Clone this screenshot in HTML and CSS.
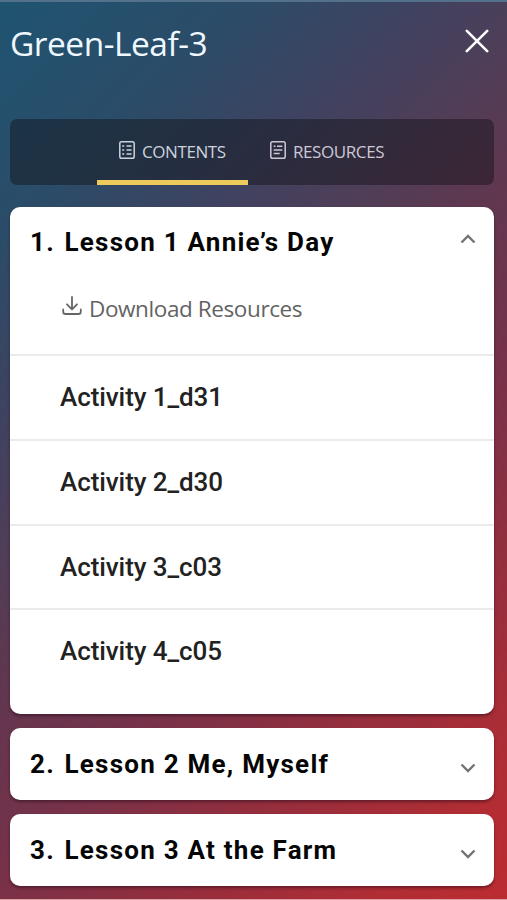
FILE: index.html
```html
<!DOCTYPE html>
<html lang="en">
<head>
<meta charset="utf-8">
<title>Green-Leaf-3</title>
<link rel="stylesheet" href="styles.css">
</head>
<body>
<div class="panel">
  <header class="header">
    <h1 class="title">Green-Leaf-3</h1>
    <svg class="close" viewBox="0 0 24 24"><path d="M1.8 1.8 22.2 22.2M22.2 1.8 1.8 22.2"/></svg>
  </header>
  <nav class="tabs">
    <a class="tab tab-active">
      <svg class="tab-icon" viewBox="0 0 16 18"><rect x=".8" y=".8" width="14.4" height="16.4" rx="1.8"/><path d="M3.2 5h2M7.5 5h5M3.2 9h2M7.5 9h5M3.2 13h2M7.5 13h5"/></svg>
      <span class="tab-label">CONTENTS</span>
    </a>
    <a class="tab">
      <svg class="tab-icon" viewBox="0 0 16 18"><rect x=".8" y=".8" width="14.4" height="16.4" rx="1.8"/><path d="M3.7 5.2h1.8M7 5.2h5.3M3.7 9h8.6M3.7 12.6h6"/></svg>
      <span class="tab-label">RESOURCES</span>
    </a>
  </nav>
  <main class="lessons">
    <section class="card">
      <div class="lesson lesson-open">
        <h2 class="lesson-title"><span class="num">1.</span><span>Lesson 1 Annie’s Day</span></h2>
        <svg class="chevron" viewBox="0 0 16 10"><path d="M1.5 8.5 8 2l6.500 6.500"/></svg>
      </div>
      <div class="download">
        <svg class="download-icon" viewBox="0 0 20 20"><path d="M10 1v12M5 8.300l5 5 5-5M1.200 13.500v2.200q0 2.300 2.300 2.300h13q2.300 0 2.300-2.300v-2.200"/></svg>
        <span>Download Resources</span>
      </div>
      <ul class="activities">
        <li class="activity">Activity 1_d31</li>
        <li class="activity">Activity 2_d30</li>
        <li class="activity">Activity 3_c03</li>
        <li class="activity">Activity 4_c05</li>
      </ul>
    </section>
    <section class="card">
      <div class="lesson">
        <h2 class="lesson-title"><span class="num">2.</span><span>Lesson 2 Me, Myself</span></h2>
        <svg class="chevron" viewBox="0 0 16 10"><path d="M1.5 1.500 8 8l6.500-6.500"/></svg>
      </div>
    </section>
    <section class="card">
      <div class="lesson">
        <h2 class="lesson-title"><span class="num">3.</span><span>Lesson 3 At the Farm</span></h2>
        <svg class="chevron" viewBox="0 0 16 10"><path d="M1.5 1.500 8 8l6.500-6.500"/></svg>
      </div>
    </section>
  </main>
</div>
</body>
</html>
```
FILE: styles.css
```css
* { box-sizing: border-box; }
body { margin: 0; }
.panel {
  height: 900px;
  padding: 0 13.5px 0 10px;
  overflow: hidden;
  border-top: 2px solid #53718a;
  border-bottom: 1px solid #dca0a4;
  background: linear-gradient(135deg, #1f5471 0%, #2b4c68 17%, #3f4260 30%, #4f3e58 39%, #5d3850 47%, #75324a 61%, #922e3e 75%, #b12d34 91%, #bb2c30 100%);
  font-family: "Open Sans", sans-serif;
}
.header {
  height: 117px;
  padding: 16px 4.5px 0 0;
  display: flex;
  justify-content: space-between;
  align-items: flex-start;
}
.title { margin: 0; font-size: 33.5px; line-height: 50px; font-weight: 400; letter-spacing: -.5px; color: #eff8ff; }
.close { width: 24px; height: 24px; margin-top: 11px; fill: none; stroke: #fff; stroke-width: 2.6; stroke-linecap: round; }
.tabs {
  height: 66px;
  padding-left: 87px;
  display: flex;
  border-radius: 7px;
  background: rgba(15, 15, 20, .44);
}
.tab {
  width: 151px;
  height: 66px;
  padding-left: 22px;
  display: flex;
  gap: 7px;
  align-items: center;
  border-bottom: 5px solid transparent;
  color: #cbd3df;
}
.tab-active { border-bottom-color: #edca5c; }
.tab + .tab { color: #ccc8d6; }
.tab-icon { width: 16px; height: 18px; flex: none; fill: none; stroke: currentColor; stroke-width: 1.5; }
.tab-label { margin-top: 4px; font-size: 17px; line-height: 24px; letter-spacing: -.42px; white-space: nowrap; }
.lessons { margin-top: 22px; display: flex; flex-direction: column; gap: 14px; }
.card {
  border-radius: 10px;
  background: #fff;
  box-shadow: 0 2px 3px rgba(40, 10, 25, .5);
}
.lesson {
  height: 72px;
  padding: 0 18px 0 20px;
  display: flex;
  align-items: center;
  justify-content: space-between;
}
.lesson-title {
  margin: 0;
  display: flex;
  font: 700 26px/36px Roboto, sans-serif;
  letter-spacing: 1.24px;
  color: #050505;
}
.num { width: 34.500px; }
.chevron { width: 16px; height: 10px; margin-top: 8px; fill: none; stroke: #737373; stroke-width: 2.4; }
.lesson-open .chevron { margin-top: -9px; }
.lesson-open .lesson-title { margin-top: -2px; }
.download {
  height: 75px;
  padding: 0 0 16px 52px;
  display: flex;
  align-items: center;
  gap: 7px;
  font-size: 22.5px;
  line-height: 32px;
  letter-spacing: -.4px;
  color: #636363;
}
.download-icon { width: 20px; height: 20px; flex: none; margin-top: -6px; fill: none; stroke: #666; stroke-width: 1.8; stroke-linecap: round; stroke-linejoin: round; }
.activities { margin: 0; padding: 0 0 21px; list-style: none; }
.activity {
  height: 84.75px;
  padding-left: 50px;
  border-top: 2px solid #ebebeb;
  font: 500 26px/82px Roboto, sans-serif;
  letter-spacing: -.08px;
  color: #222;
}
```
